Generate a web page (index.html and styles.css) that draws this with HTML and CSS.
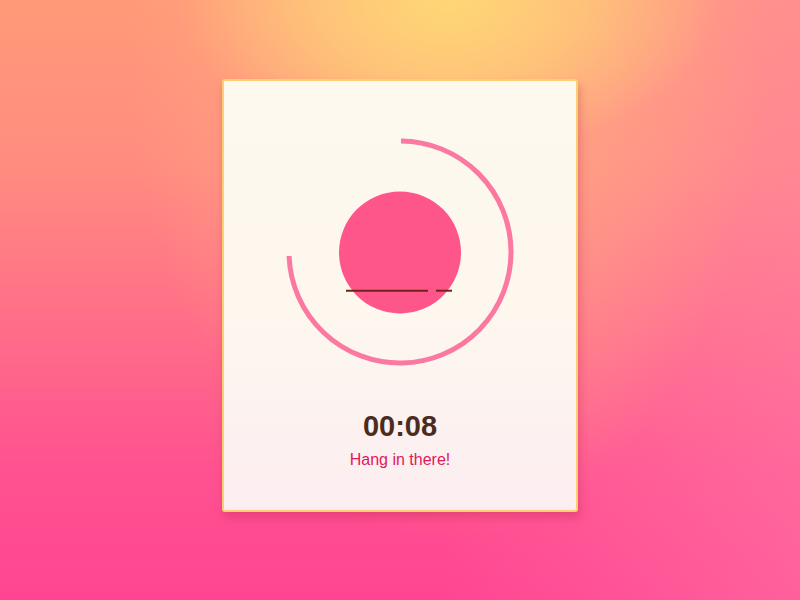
FILE: index.html
```html
<!DOCTYPE html>
<html>
<head>
<meta charset="utf-8">
<link rel="stylesheet" href="styles.css">
</head>
<body>
<main class="stage">
  <section class="card">
    <svg class="timer-ring" viewBox="0 0 230 230" width="230" height="230">
      <path class="ring" d="M116 4 A111 111 0 1 1 4.07 119" />
      <circle class="core" cx="115" cy="115.5" r="61" />
      <line class="dash" x1="61" y1="153.7" x2="143" y2="153.7" />
      <line class="dash" x1="151" y1="153.7" x2="167" y2="153.7" />
    </svg>
    <div class="time">00:08</div>
    <div class="note">Hang in there!</div>
  </section>
</main>
</body>
</html>
```
FILE: styles.css
```css
html, body {
  margin: 0;
  padding: 0;
  width: 800px;
  height: 600px;
  overflow: hidden;
}
body {
  font-family: "Liberation Sans", Arial, sans-serif;
  background:
    radial-gradient(ellipse 34% 26% at 56% 0%, rgba(254, 216, 118, 0.95) 0%, rgba(254, 212, 118, 0.6) 50%, rgba(254, 212, 118, 0) 100%),
    radial-gradient(ellipse 40% 85% at 56% 5%, rgba(255, 185, 125, 0.85) 0%, rgba(255, 175, 130, 0.45) 55%, rgba(255, 175, 130, 0) 100%),
    linear-gradient(90deg, rgba(255, 130, 170, 0) 55%, rgba(255, 130, 170, 0.45) 100%),
    linear-gradient(180deg, #ff9a78 0%, #ff8c80 28%, #ff7088 52%, #ff5290 78%, #ff4592 100%);
}
.stage {
  display: flex;
  justify-content: center;
  padding-top: 79px;
}
.card {
  box-sizing: border-box;
  width: 356px;
  height: 433px;
  border: 2px solid #fccf72;
  border-radius: 3px;
  background: linear-gradient(180deg, #fdf9ef 0%, #fdf7ee 55%, #fcedf1 100%);
  box-shadow: 2px 6px 8px rgba(190, 40, 90, 0.35);
  display: flex;
  flex-direction: column;
  align-items: center;
}
.timer-ring {
  display: block;
  margin-top: 56px;
}
.ring {
  fill: none;
  stroke: #fb79a1;
  stroke-width: 5;
}
.core {
  fill: #fe568b;
}
.dash {
  stroke: #6e2418;
  stroke-width: 2;
}
.time {
  margin-top: 42px;
  font-size: 29px;
  line-height: 34px;
  font-weight: bold;
  color: #4a2c20;
}
.note {
  margin-top: 7px;
  font-size: 16px;
  line-height: 20px;
  color: #e0185a;
}
```
